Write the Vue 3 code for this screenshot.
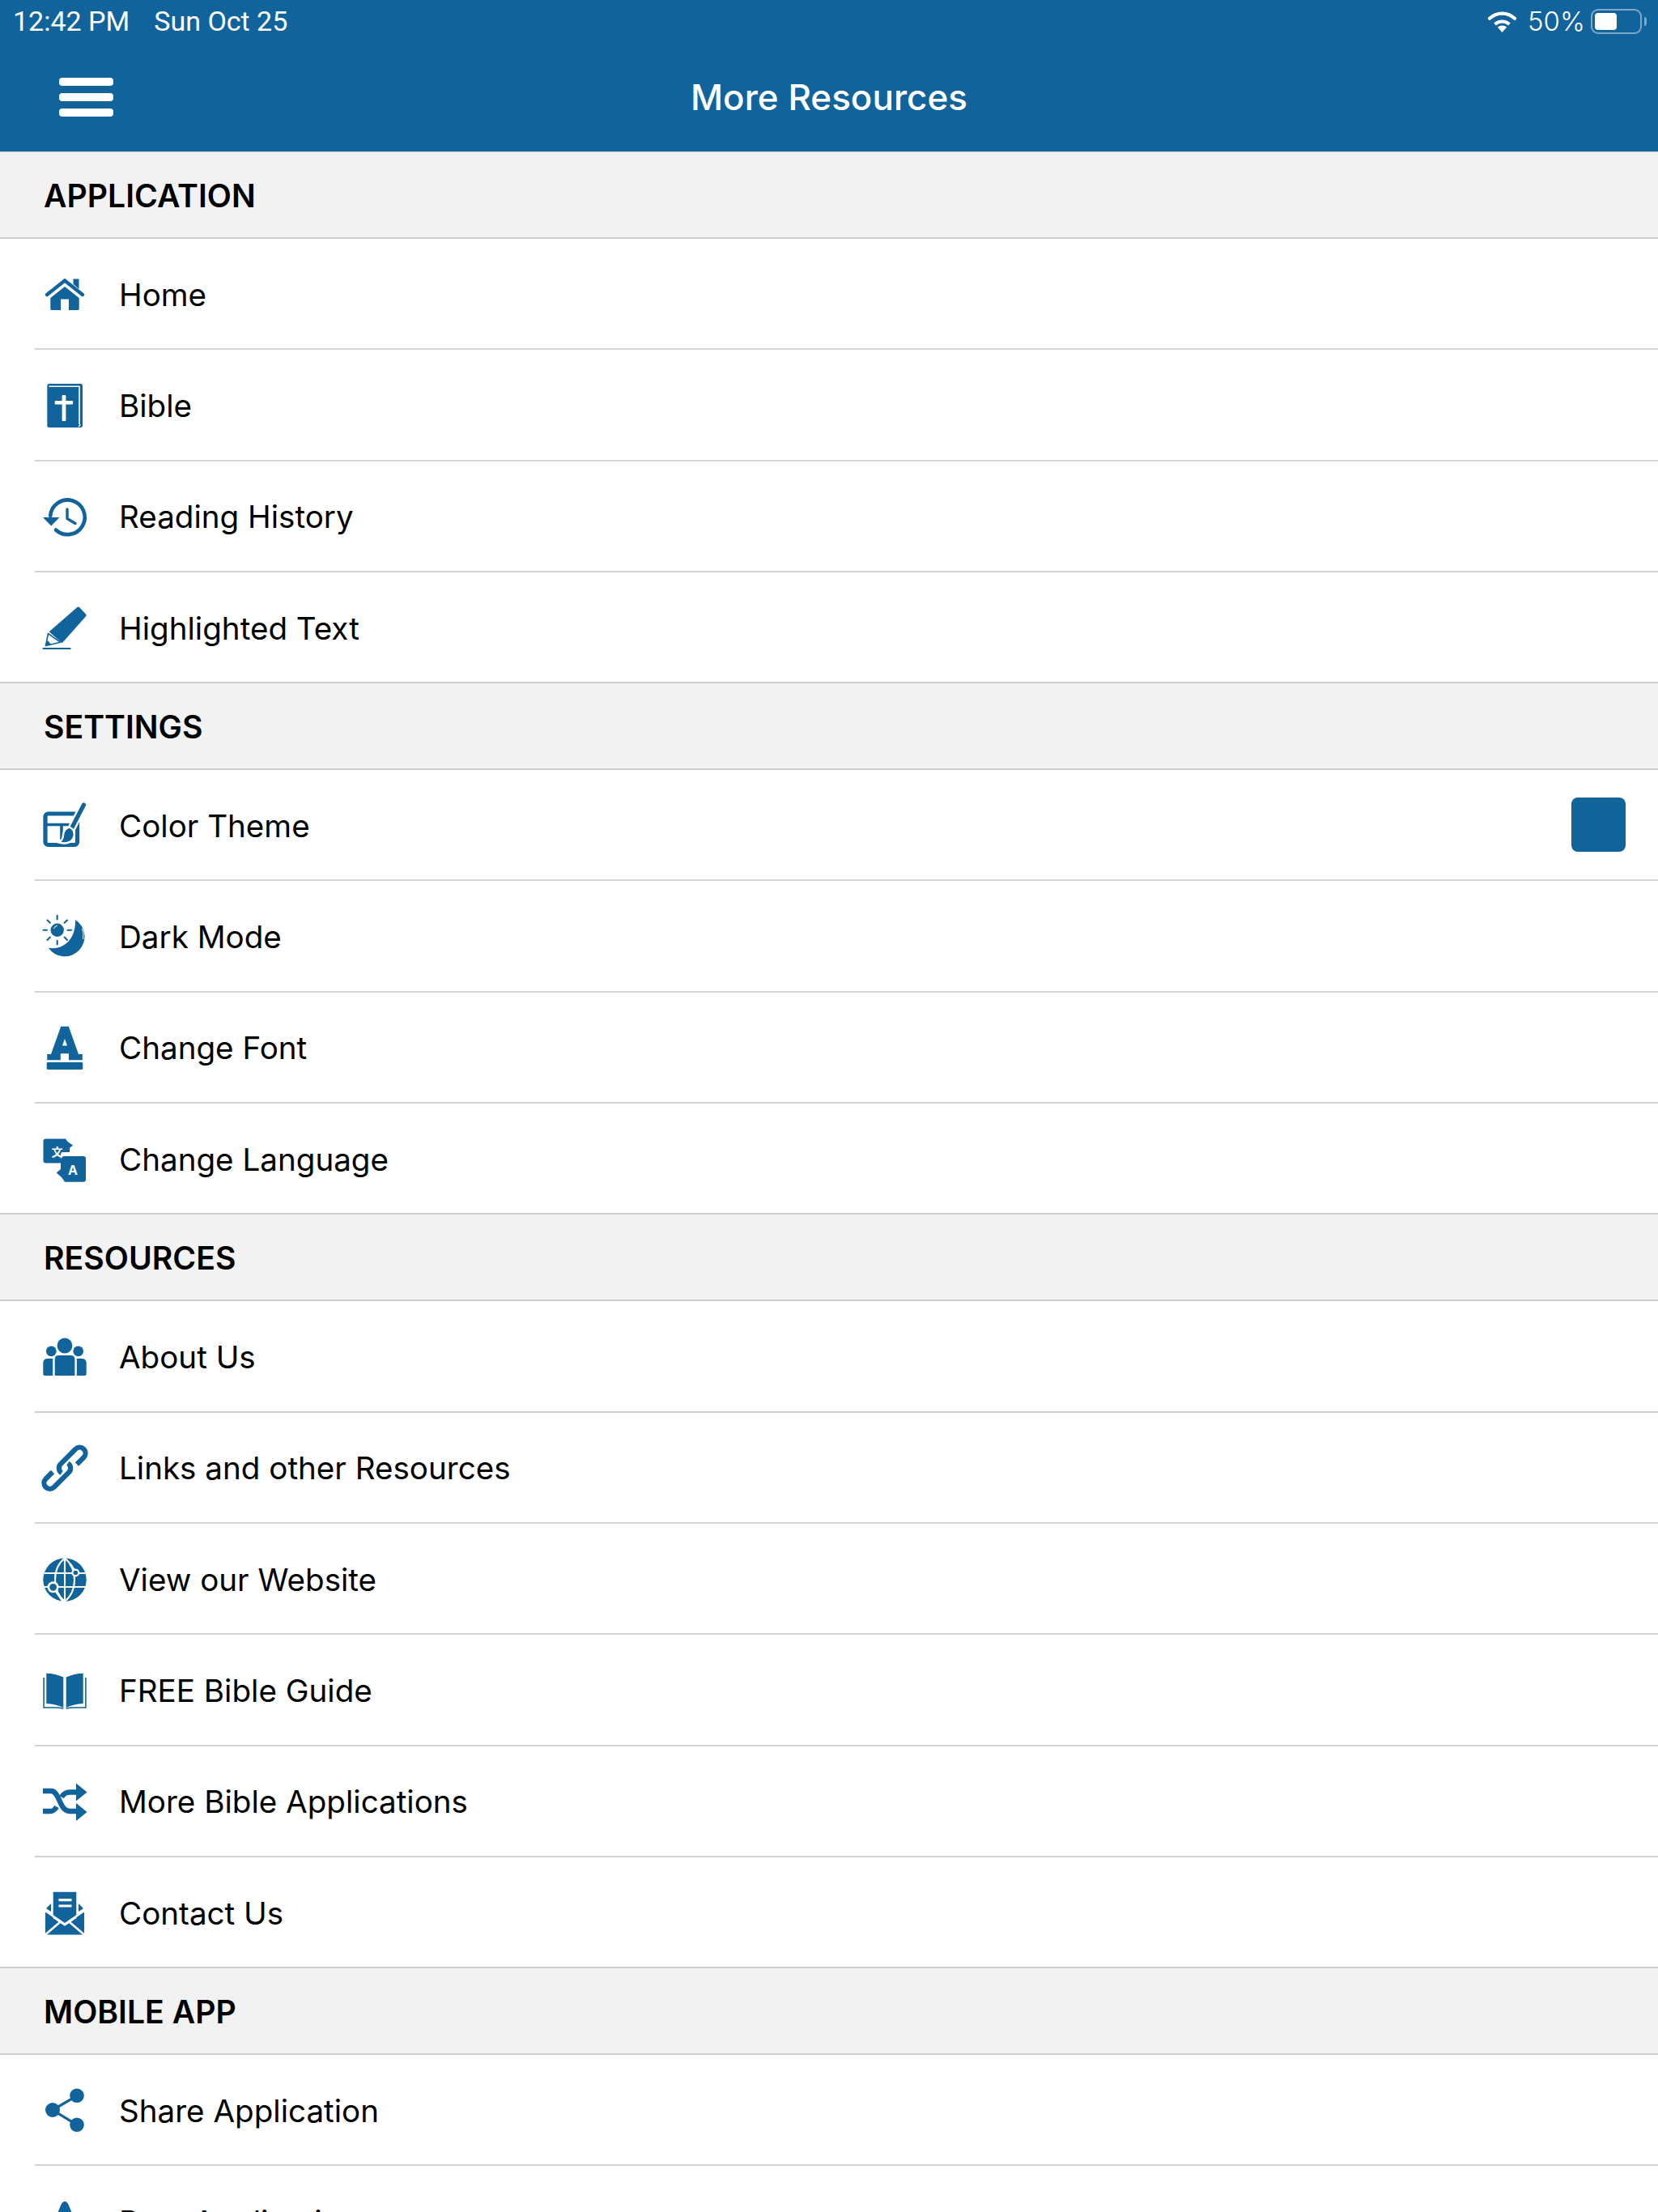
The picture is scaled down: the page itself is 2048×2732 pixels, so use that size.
<script setup>
const sections = [
  { title: 'APPLICATION', items: [
    { icon: 'home', label: 'Home' },
    { icon: 'bible', label: 'Bible' },
    { icon: 'history', label: 'Reading History' },
    { icon: 'marker', label: 'Highlighted Text' },
  ] },
  { title: 'SETTINGS', items: [
    { icon: 'theme', label: 'Color Theme', swatch: true },
    { icon: 'dark', label: 'Dark Mode' },
    { icon: 'font', label: 'Change Font' },
    { icon: 'lang', label: 'Change Language' },
  ] },
  { title: 'RESOURCES', items: [
    { icon: 'people', label: 'About Us' },
    { icon: 'link', label: 'Links and other Resources' },
    { icon: 'globe', label: 'View our Website' },
    { icon: 'book', label: 'FREE Bible Guide' },
    { icon: 'shuffle', label: 'More Bible Applications' },
    { icon: 'mail', label: 'Contact Us' },
  ] },
  { title: 'MOBILE APP', items: [
    { icon: 'share', label: 'Share Application' },
    { icon: 'star', label: 'Rate Application' },
  ] },
]
</script>

<template>
  <div class="screen">
    <header class="top">
      <div class="status">
        <div class="status-left">
          <span>12:42 PM</span>
          <span>Sun Oct 25</span>
        </div>
        <div class="status-right">
          <svg class="wifi" viewBox="0 0 37 27" width="37" height="27">
            <path d="M18.5 27 L12.8 20.6 A8.6 8.6 0 0 1 24.2 20.6 Z" fill="#fff"/>
            <path d="M9.6 17 A13.4 13.4 0 0 1 27.4 17" fill="none" stroke="#fff" stroke-width="4"/>
            <path d="M3 9.8 A22.4 22.4 0 0 1 34 9.8" fill="none" stroke="#fff" stroke-width="4.2" stroke-linecap="round"/>
          </svg>
          <span class="pct">50%</span>
          <div class="battery"><div class="charge"></div></div>
          <div class="nub"></div>
        </div>
      </div>
      <div class="nav">
        <div class="burger"><i></i><i></i><i></i></div>
        <div class="title">More Resources</div>
        <div></div>
      </div>
    </header>

    <section v-for="s in sections" :key="s.title">
      <h2 class="section"><span>{{ s.title }}</span></h2>
      <div v-for="it in s.items" :key="it.label" class="row">
        <svg class="icon" viewBox="0 0 60 60" width="60" height="60">
          <g v-if="it.icon === 'home'">
            <path d="M40.5 11.5 H47.5 V24 L40.5 18 Z" />
            <path d="M8 31 L30 13.5 L52 31" fill="none" stroke="#11639b" stroke-width="4.4" stroke-linecap="round" stroke-linejoin="miter"/>
            <path d="M30 21 L47.7 35 V48.5 Q47.7 50 46 50 H35 V36.5 H25 V50 H14 Q12.3 50 12.3 48.5 V35 Z" />
          </g>
          <g v-else-if="it.icon === 'bible'">
            <rect x="8.3" y="4" width="43.7" height="54" rx="2.5" />
            <path d="M10.5 7.3 H48 V54" fill="none" stroke="#fff" stroke-width="1.6"/>
            <path d="M49.4 54.5 L47 57" fill="none" stroke="#fff" stroke-width="1.4"/>
            <rect x="26.6" y="18" width="4.8" height="32" rx="1" fill="#fff"/>
            <rect x="17.7" y="25" width="22.4" height="4.6" rx="1" fill="#fff"/>
          </g>
          <g v-else-if="it.icon === 'history'">
            <path d="M12.2 30 A21.3 21.3 0 1 1 19 47.5" fill="none" stroke="#11639b" stroke-width="4.6" stroke-linecap="round"/>
            <path d="M3 32 H23.5 L13.2 42.5 Z" />
            <path d="M33 22 V33.5 L43 39.5" fill="none" stroke="#11639b" stroke-width="3.4" stroke-linecap="round" stroke-linejoin="round"/>
          </g>
          <g v-else-if="it.icon === 'marker'">
            <path d="M45.3 5 Q46.7 3.8 48 5 L56 13.6 Q57.2 15 56 16.3 L26.7 49.3 L10.7 35.3 Z" />
            <path d="M9.5 37.5 L6.5 52.5 L24.5 48.2 Z" fill="#fff" stroke="#11639b" stroke-width="1.6" stroke-linejoin="round"/>
            <path d="M5.5 53 L9 46 L13 51 Z" />
            <path d="M3.5 56 H36.7" fill="none" stroke="#11639b" stroke-width="1.8" stroke-linecap="round"/>
          </g>
          <g v-else-if="it.icon === 'theme'">
            <rect x="6" y="16" width="39.5" height="38.5" rx="3.5" fill="none" stroke="#11639b" stroke-width="5.2"/>
            <path d="M6 29.5 H46 M26 29.5 V48" fill="none" stroke="#11639b" stroke-width="3.6"/>
            <path d="M53.5 5 L39 33" fill="none" stroke="#fff" stroke-width="10" stroke-linecap="round"/>
            <path d="M53.5 5 L39 33" fill="none" stroke="#11639b" stroke-width="5.2" stroke-linecap="round"/>
            <path d="M36 32.5 Q44 37 41 45.5 Q36.5 55 23 51.5 Q28 48 28 42 Q29 34 36 32.5 Z" stroke="#fff" stroke-width="2.4"/>
          </g>
          <g v-else-if="it.icon === 'dark'">
            <circle cx="20.7" cy="22.7" r="8.2"/>
            <path d="M16.5 21 A5 5 0 0 1 21 17.2" fill="none" stroke="#fff" stroke-width="1"/>
            <path d="M20.7 4.8 V9.5 M20.7 36 V40.5 M3.5 22.7 H8 M33.5 22.7 H38 M8.5 10.5 L11.8 13.8 M29.6 31.6 L33 35 M33 10.5 L29.6 13.8 M11.8 31.6 L8.5 35" fill="none" stroke="#11639b" stroke-width="2.1" stroke-linecap="round"/>
            <path d="M43 10 A24.5 24.5 0 1 1 9.7 44.5 C24 48 44 38 43 10 Z"/>
            <path d="M51.5 21 Q54 27 52.5 34" fill="none" stroke="#fff" stroke-width="1"/>
          </g>
          <g v-else-if="it.icon === 'font'">
            <path fill-rule="evenodd" d="M25.2 4.8 H34.8 L47 39 H51.8 V46.2 H35 V38.2 H24.8 V46.2 H8.3 V39 H13 Z M30 20 L27 28.5 H33 Z"/>
            <rect x="7.7" y="49" width="44.6" height="9" rx="1.4"/>
          </g>
          <g v-else-if="it.icon === 'lang'">
            <path d="M6.5 5.5 H31 L33.5 9 L40 13.5 L36 17 V22 H27 Q25 22 25 26 V35.5 H6.5 Q3.5 35.5 3.5 32 V8.5 Q3.5 5.5 6.5 5.5 Z"/>
            <path d="M30 27 H53 Q56 27 56 30 V55.5 Q56 58.7 53 58.7 H30 L26 53 L19.7 47.5 L25 43 V32 Q25 27 30 27 Z"/>
            <text x="20.5" y="26.5" text-anchor="middle" class="glyph zh">文</text>
            <text x="40" y="49.5" text-anchor="middle" class="glyph">A</text>
          </g>
          <g v-else-if="it.icon === 'people'">
            <circle cx="30" cy="17" r="9.4"/>
            <circle cx="13.3" cy="23.8" r="6.4"/>
            <circle cx="46.7" cy="23.8" r="6.4"/>
            <path d="M22.5 29 H37.5 Q42.4 29 42.4 34 V54 H17.7 V34 Q17.7 29 22.5 29 Z"/>
            <path d="M9 33 H15.2 V54 H5.3 Q3.3 54 3.3 52 V38.5 Q3.3 33 9 33 Z"/>
            <path d="M44.8 33 H51 Q56.7 33 56.7 38.5 V52 Q56.7 54 54.7 54 H44.8 Z"/>
          </g>
          <g v-else-if="it.icon === 'link'" transform="translate(30 31.25) rotate(-45)" fill="none" stroke="#11639b" stroke-width="6.2" stroke-linecap="butt">
            <path d="M-14 -7.2 H-26 A7.2 7.2 0 0 0 -26 7.2 H0 A7.2 7.2 0 0 0 7 -1.5"/>
            <path d="M14 7.2 H26 A7.2 7.2 0 0 0 26 -7.2 H0 A7.2 7.2 0 0 0 -7 1.5"/>
          </g>
          <g v-else-if="it.icon === 'globe'">
            <circle cx="30" cy="31.2" r="26.7"/>
            <g fill="none" stroke="#fff" stroke-width="2.1">
              <path d="M30 4 V58"/>
              <path d="M30 4.5 C14 17 14 45 30 58 M30 4.5 C46 17 46 45 30 58"/>
              <path d="M5 23 H55 M5 40 H55"/>
              <path d="M16 40.6 L28 58 M43.3 22.3 L37 12" stroke-width="3"/>
            </g>
            <circle cx="15.6" cy="40.3" r="7" fill="#fff"/>
            <circle cx="15.6" cy="40.3" r="4.4"/>
            <circle cx="43.3" cy="22.5" r="5" fill="#fff"/>
            <circle cx="43.3" cy="22.5" r="2.8"/>
          </g>
          <g v-else-if="it.icon === 'book'">
            <path d="M7.3 9.8 Q18 10 28.3 14.5 V52 Q18 47.5 7.3 47 Z"/>
            <path d="M52.7 9.8 Q42 10 31.7 14.5 V52 Q42 47.5 52.7 47 Z"/>
            <path d="M4.1 15 V52 H17 Q24 52 28.5 53 M55.9 15 V52 H43 Q36 52 31.5 53" fill="none" stroke="#11639b" stroke-width="1.6"/>
          </g>
          <g v-else-if="it.icon === 'shuffle'" transform="translate(0 1)">
            <path d="M3 17 H13 C24 17 23 42 36 42 H46" fill="none" stroke="#11639b" stroke-width="6.4"/>
            <path d="M3 42 H12 C15.5 42 18 40 20 36.5 M26 24.5 C28.5 20.5 31 18.5 36 18.5 H46" fill="none" stroke="#11639b" stroke-width="6.4"/>
            <path d="M44 7.5 L57.5 18.5 L44 29.5 Z"/>
            <path d="M44 32 L57.5 43 L44 54 Z"/>
          </g>
          <g v-else-if="it.icon === 'mail'">
            <path d="M15.7 4.7 H44.3 V34 L30 44 L15.7 34 Z"/>
            <path d="M22.5 13 H38.5 V16.3 H22.5 Z M22.5 20.5 H38.5 V23.5 H22.5 Z" fill="#fff"/>
            <path d="M13 19 V29 L7 25 Z M47 19 V29 L53 25 Z"/>
            <path d="M6 28 L30 44.5 L54 28 V57.5 H6 Z"/>
            <path d="M6 57.5 L24 42 M54 57.5 L36 42 M6 28 L30 44.5 L54 28" fill="none" stroke="#fff" stroke-width="2.6"/>
            <path d="M16 36 L30 45.5 L44 36" fill="none" stroke="#fff" stroke-width="2.2"/>
          </g>
          <g v-else-if="it.icon === 'share'">
            <circle cx="45" cy="12.3" r="8.8"/>
            <circle cx="15" cy="30" r="9"/>
            <circle cx="45" cy="48.3" r="8.8"/>
            <path d="M45 12.3 L15 30 L45 48.3" fill="none" stroke="#11639b" stroke-width="3.2"/>
          </g>
          <g v-else-if="it.icon === 'star'">
            <path d="M30 6 Q33 6 35 11 L40.5 24 L55 25.5 L44 36 L47 50 L30 43 L13 50 L16 36 L5 25.5 L19.5 24 L25 11 Q27 6 30 6 Z"/>
          </g>
        </svg>
        <span class="label">{{ it.label }}</span>
        <span v-if="it.swatch" class="swatch"></span>
      </div>
    </section>
  </div>
</template>

<style>
html, body { margin: 0; overflow: hidden; }
</style>

<style scoped>
.screen {
  width: 2048px;
  height: 2732px;
  overflow: hidden;
  background: #fff;
  font-family: Inter, "Noto Sans", sans-serif;
  color: #000;
}
.top {
  height: 187px;
  background: #11639b;
  color: #fff;
  display: flex;
  flex-direction: column;
  border-bottom: 1px solid #c9c9c9;
}
.status {
  height: 52px;
  display: flex;
  justify-content: space-between;
  align-items: center;
  padding: 0 14px 0 16px;
  font-size: 33px;
}
.status-left {
  display: flex;
  gap: 30px;
  font-family: Roboto, sans-serif;
  font-size: 34px;
}
.status-right {
  display: flex;
  align-items: center;
}
.wifi { margin-right: 13px; }
.pct { width: 70px; margin-right: 8px; font-weight: 300; }
.battery {
  width: 63px;
  height: 31px;
  box-sizing: border-box;
  border: 2px solid rgba(255, 255, 255, 0.45);
  border-radius: 9px;
  padding: 3px;
}
.charge {
  width: 27px;
  height: 21px;
  background: #fff;
  border-radius: 4px;
}
.nub {
  width: 3px;
  height: 11px;
  margin-left: 3px;
  background: rgba(255, 255, 255, 0.45);
  border-radius: 0 3px 3px 0;
}
.nav {
  flex: 1;
  display: grid;
  grid-template-columns: 1fr auto 1fr;
  align-items: center;
  padding-left: 73px;
}
.burger {
  width: 67px;
  display: flex;
  flex-direction: column;
  gap: 9px;
}
.burger i {
  display: block;
  height: 10px;
  background: #fff;
  border-radius: 4px;
}
.title {
  font-size: 44px;
  font-weight: 500;
  margin-left: -73px;
}
.section {
  margin: 0;
  height: 107px;
  box-sizing: border-box;
  display: flex;
  align-items: center;
  padding-left: 54px;
  background: #f2f2f2;
  border-bottom: 2px solid #cfcfcf;
  font-size: 39.2px;
  font-weight: 600;
}
.section span { padding-top: 1px; }
.row {
  height: 137.3px;
  box-sizing: border-box;
  display: flex;
  align-items: center;
  margin-left: 43px;
  padding-left: 7px;
  padding-right: 40px;
  border-bottom: 2px solid #d2d2d2;
}
section .row:last-child {
  margin-left: 0;
  padding-left: 50px;
  border-bottom-color: #cfcfcf;
}
.icon {
  flex: none;
  fill: #11639b;
  margin-right: 37px;
}
.label {
  flex: 1;
  padding-top: 2px;
  font-size: 38.6px;
  font-weight: 400;
}
.swatch {
  width: 67px;
  height: 67px;
  border-radius: 8px;
  background: #11639b;
}
.glyph {
  fill: #fff;
  font-family: Inter, sans-serif;
  font-size: 16px;
  font-weight: 700;
}
.zh {
  font-family: "Noto Sans CJK SC", sans-serif;
  font-size: 14px;
}
</style>
